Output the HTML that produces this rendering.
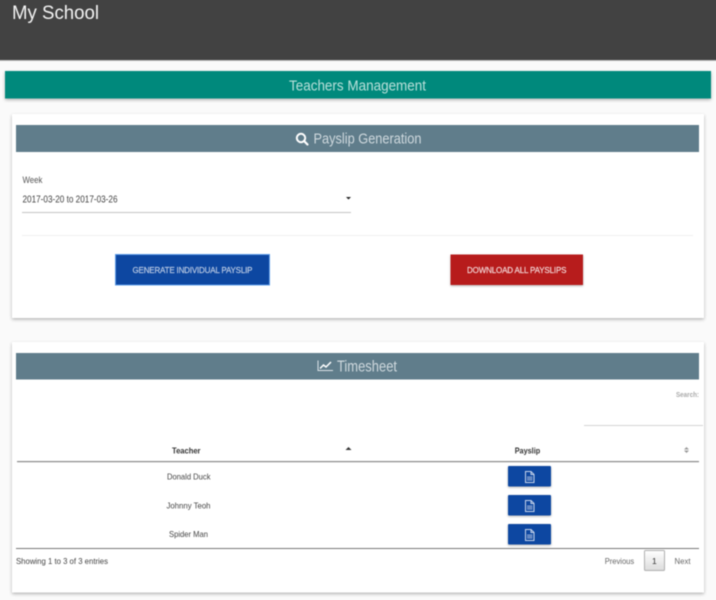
<!DOCTYPE html>
<html><head><meta charset="utf-8"><title>My School</title>
<style>
html,body{margin:0;padding:0;width:716px;height:600px;overflow:hidden;background:#fafafa}
#wrap{position:relative;width:716px;height:600px;overflow:hidden;contain:strict}
svg{display:block;position:absolute;left:-6px;top:-6px;filter:blur(.4px)}
text{font-family:"Liberation Sans",sans-serif}
</style></head><body>
<div id="wrap">
<svg width="728" height="612" viewBox="-6 -6 728 612" xmlns="http://www.w3.org/2000/svg">
<defs>
<linearGradient id="g" x1="0" y1="0" x2="0" y2="1"><stop offset="0" stop-color="#fff"/><stop offset="1" stop-color="#dcdcdc"/></linearGradient>
<filter id="s" x="-5%" y="-10%" width="110%" height="125%"><feDropShadow dx="0" dy="1.5" stdDeviation="1.5" flood-color="#000" flood-opacity=".28"/></filter>
<filter id="s2" x="-10%" y="-20%" width="120%" height="150%"><feDropShadow dx="0" dy="1" stdDeviation="1" flood-color="#000" flood-opacity=".3"/></filter>
<g id="file" fill="none" stroke="#c6d3ea" stroke-width="1"><path d="M525.500 471.500h5.500l3 3v8h-8.500z"/><path d="M531 471.500v3h3"/><path d="M527 477h5.500M527 478.500h5.500M527 480h5.500" stroke="#8fa8d4"/></g>
</defs>

<rect x="-6" y="-6" width="728" height="66" fill="#424242"/>
<rect x="-6" y="60" width="728" height="1" fill="#bdbdbd"/>
<text x="12" y="19" font-size="19" fill="#f4f4f4" textLength="87" lengthAdjust="spacingAndGlyphs">My School</text>

<rect x="5" y="71" width="706" height="27.500" fill="#00897b" filter="url(#s)"/>
<text x="289" y="90.500" font-size="15" fill="#b9e0da" textLength="137" lengthAdjust="spacingAndGlyphs">Teachers Management</text>

<rect x="12" y="114" width="692" height="204" fill="#fff" filter="url(#s)"/>
<rect x="16" y="125" width="683" height="27" fill="#607d8b"/>
<circle cx="301" cy="138" r="4.200" fill="none" stroke="#fff" stroke-width="2"/>
<path d="M304 141l3.500 3.500" stroke="#fff" stroke-width="2.200" stroke-linecap="round"/>
<text x="313.500" y="143.500" font-size="15" fill="#cfd9de" textLength="108" lengthAdjust="spacingAndGlyphs">Payslip Generation</text>

<text x="22.500" y="183" font-size="9.500" fill="#555" textLength="20" lengthAdjust="spacingAndGlyphs">Week</text>
<text x="22.500" y="202.500" font-size="10" fill="#444" textLength="95" lengthAdjust="spacingAndGlyphs">2017-03-20 to 2017-03-26</text>
<path d="M346 197h5l-2.500 2.500z" fill="#222"/>
<rect x="22" y="212" width="329" height="1" fill="#c4c4c4"/>
<rect x="22" y="235" width="671" height="1" fill="#f0f0f0"/>

<rect x="115.500" y="254.500" width="154" height="30.500" fill="#0d47a1" stroke="#5b9be8" stroke-width="1"/>
<text x="132.500" y="273" font-size="8" fill="#c0cfe6" stroke="#c0cfe6" stroke-width=".15" textLength="120" lengthAdjust="spacing">GENERATE INDIVIDUAL PAYSLIP</text>
<rect x="450.500" y="254.500" width="132.500" height="30.500" fill="#b71c1c" filter="url(#s2)"/>
<text x="467" y="273" font-size="8" fill="#f4dcdc" stroke="#f4dcdc" stroke-width=".15" textLength="99.500" lengthAdjust="spacing">DOWNLOAD ALL PAYSLIPS</text>

<rect x="12" y="342" width="692" height="250.500" fill="#fff" filter="url(#s)"/>
<rect x="16" y="353" width="683" height="26.500" fill="#607d8b"/>
<path d="M318 360.500v10h15" fill="none" stroke="#dbe3e7" stroke-width="1"/>
<path d="M320 368.500l3.500-3.500 2.500 2 5-5" fill="none" stroke="#fff" stroke-width="1.500"/>
<text x="337" y="371.500" font-size="16" fill="#cfd9de" textLength="60" lengthAdjust="spacingAndGlyphs">Timesheet</text>

<text x="676" y="397" font-size="7" font-weight="bold" fill="#aaa" textLength="23" lengthAdjust="spacingAndGlyphs">Search:</text>
<rect x="584" y="425" width="119" height="1" fill="#d4d4d4"/>

<text x="172" y="453.500" font-size="8.500" font-weight="bold" fill="#333" textLength="28.500" lengthAdjust="spacingAndGlyphs">Teacher</text>
<path d="M345.500 450l3-3 3 3z" fill="#333"/>
<text x="514.700" y="453.500" font-size="8.500" font-weight="bold" fill="#333" textLength="25.500" lengthAdjust="spacingAndGlyphs">Payslip</text>
<path d="M684 449.500l2.500-2.500 2.500 2.500z M684 450.500l2.500 2.500 2.500-2.500z" fill="#999"/>
<rect x="17" y="461" width="682" height="1.200" fill="#8a8a8a"/>

<text x="167" y="479.500" font-size="8.500" fill="#444" textLength="43.500" lengthAdjust="spacingAndGlyphs">Donald Duck</text>
<text x="166.500" y="508.500" font-size="8.500" fill="#444" textLength="44" lengthAdjust="spacingAndGlyphs">Johnny Teoh</text>
<text x="169" y="537" font-size="8.500" fill="#444" textLength="39" lengthAdjust="spacingAndGlyphs">Spider Man</text>

<rect x="508" y="466" width="43" height="20.500" rx="1" fill="#0d47a1" filter="url(#s2)"/>
<rect x="508" y="495" width="43" height="20.500" rx="1" fill="#0d47a1" filter="url(#s2)"/>
<rect x="508" y="524" width="43" height="20.500" rx="1" fill="#0d47a1" filter="url(#s2)"/>
<use href="#file"/>
<use href="#file" y="29"/>
<use href="#file" y="58"/>

<rect x="16" y="548" width="683" height="1" fill="#777"/>
<text x="16" y="564" font-size="8.500" fill="#444" textLength="92" lengthAdjust="spacingAndGlyphs">Showing 1 to 3 of 3 entries</text>
<text x="604.700" y="564" font-size="8.500" fill="#666" textLength="29.500" lengthAdjust="spacingAndGlyphs">Previous</text>
<rect x="644.500" y="550.500" width="20" height="20" rx="1" fill="url(#g)" stroke="#b0b0b0"/>
<text x="652" y="564" font-size="8.500" fill="#333">1</text>
<text x="674.500" y="564" font-size="8.500" fill="#666" textLength="16" lengthAdjust="spacingAndGlyphs">Next</text>
</svg>
</div>
</body></html>
